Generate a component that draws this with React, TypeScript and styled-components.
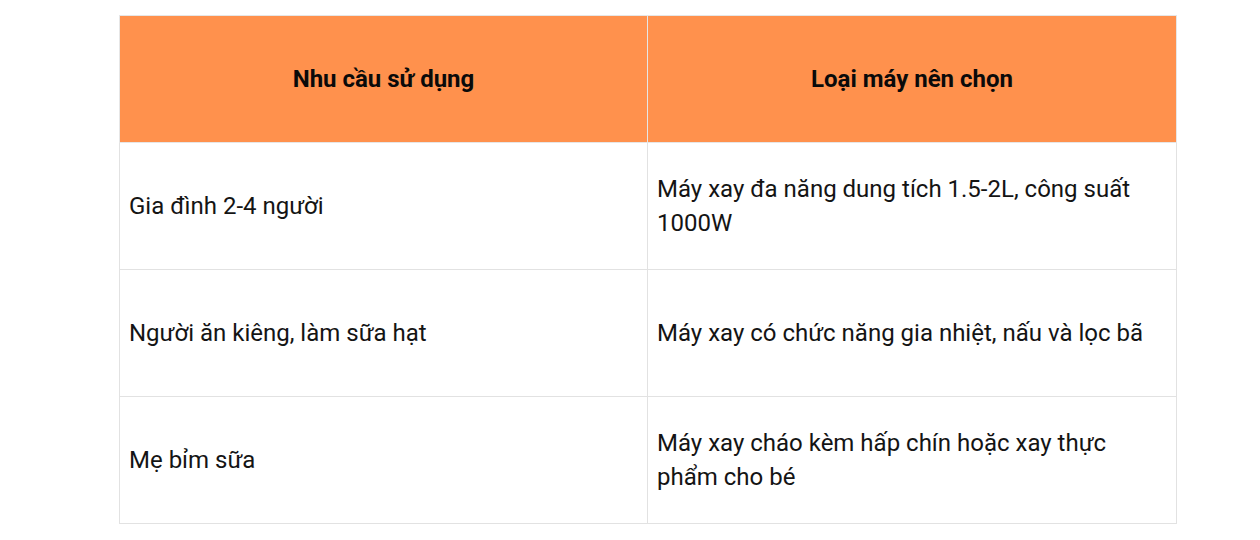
import React from 'react';
import styled, { createGlobalStyle } from 'styled-components';

const GlobalStyle = createGlobalStyle`
  html, body {
    margin: 0;
    padding: 0;
    background: #ffffff;
  }
  body {
    font-family: Roboto, "Noto Sans", "Liberation Sans", sans-serif;
    color: #111111;
  }
`;

const Page = styled.div`
  width: 1260px;
  height: 540px;
  padding: 15px 0 0 119px;
  box-sizing: border-box;
`;

const Table = styled.table`
  width: 1057px;
  border-collapse: collapse;
  table-layout: fixed;
  font-size: 24px;
  line-height: 34px;
`;

const Col = styled.col<{ $w: number }>`
  width: ${(p) => p.$w}px;
`;

const HeadCell = styled.th`
  background: #ff914d;
  border: 1px solid #e6e6e6;
  height: 127px;
  padding: 0 10px;
  font-weight: 700;
  text-align: center;
  color: #0a0a0a;
  box-sizing: border-box;
`;

const Cell = styled.td`
  border: 1px solid #e2e2e2;
  height: 127px;
  padding: 0 10px 0 9px;
  vertical-align: middle;
  text-align: left;
  font-weight: 400;
  color: #141414;
  box-sizing: border-box;
`;

const rows = [
  ['Gia đình 2-4 người', 'Máy xay đa năng dung tích 1.5-2L, công suất 1000W'],
  ['Người ăn kiêng, làm sữa hạt', 'Máy xay có chức năng gia nhiệt, nấu và lọc bã'],
  ['Mẹ bỉm sữa', 'Máy xay cháo kèm hấp chín hoặc xay thực phẩm cho bé'],
];

const App: React.FC = () => {
  return (
    <>
      <GlobalStyle />
      <Page>
        <Table>
          <colgroup>
            <Col $w={528} />
            <Col $w={529} />
          </colgroup>
          <thead>
            <tr>
              <HeadCell>Nhu cầu sử dụng</HeadCell>
              <HeadCell>Loại máy nên chọn</HeadCell>
            </tr>
          </thead>
          <tbody>
            {rows.map(([need, pick]) => (
              <tr key={need}>
                <Cell>{need}</Cell>
                <Cell>{pick}</Cell>
              </tr>
            ))}
          </tbody>
        </Table>
      </Page>
    </>
  );
};

export default App;
